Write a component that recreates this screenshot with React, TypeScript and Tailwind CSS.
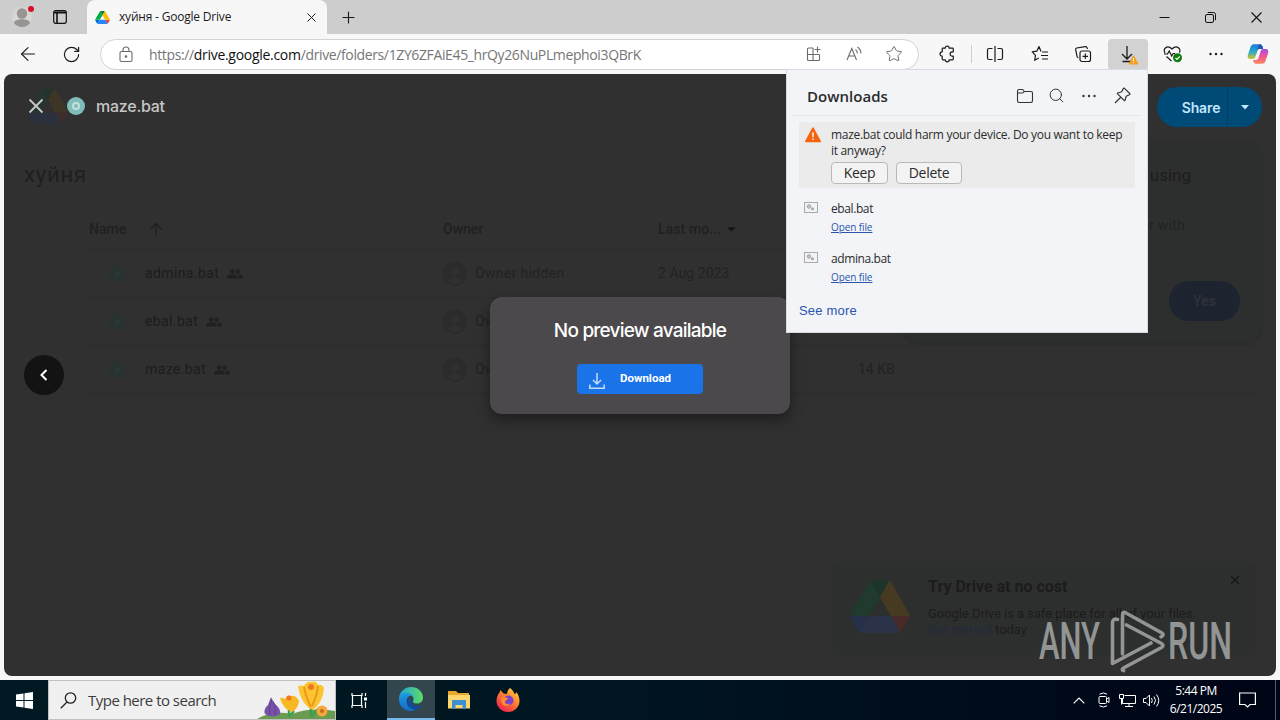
import React from 'react';
import { ArrowLeft, ArrowUp, Plus, RotateCw, X, Search, Star } from 'lucide-react';

const SEGOE = "font-['Open_Sans','Noto_Sans',sans-serif]";
const ROBOTO = "font-['Roboto',sans-serif]";

const files = [
  { name: 'admina.bat', owner: 'Owner hidden', modified: '2 Aug 2023', size: '' },
  { name: 'ebal.bat', owner: 'Owner hidden', modified: '', size: '' },
  { name: 'maze.bat', owner: 'Owner hidden', modified: '', size: '14 KB' },
];

const downloads = ['ebal.bat', 'admina.bat'];

type DriveLogoProps = { className?: string; dim?: boolean };

const DriveLogo = ({ className, dim }: DriveLogoProps) => {
  const c = dim
    ? ['#27304a', '#203a2d', '#482a29', '#1d3528', '#2b3348', '#463b22']
    : ['#0066da', '#00ac47', '#ea4335', '#00832d', '#2684fc', '#ffba00'];
  return (
    <svg viewBox="0 0 87.3 78" className={className}>
      <path fill={c[0]} d="m6.6 66.85 3.85 6.65c.8 1.4 1.95 2.5 3.3 3.3l13.75-23.8h-27.5c0 1.55.4 3.1 1.2 4.5z" />
      <path fill={c[1]} d="m43.65 25-13.75-23.8c-1.35.8-2.5 1.9-3.3 3.3l-25.4 44a9.06 9.06 0 0 0 -1.2 4.5h27.5z" />
      <path fill={c[2]} d="m73.55 76.8c1.35-.8 2.5-1.9 3.3-3.3l1.6-2.75 7.65-13.25c.8-1.4 1.2-2.95 1.2-4.5h-27.5l5.85 11.5z" />
      <path fill={c[3]} d="m43.65 25 13.75-23.8c-1.35-.8-2.9-1.2-4.5-1.2h-18.5c-1.6 0-3.15.45-4.5 1.2z" />
      <path fill={c[4]} d="m59.8 53h-32.3l-13.75 23.8c1.35.8 2.9 1.2 4.5 1.2h50.8c1.6 0 3.15-.45 4.5-1.2z" />
      <path fill={c[5]} d="m73.4 26.5-12.7-22c-.8-1.4-1.95-2.5-3.3-3.3l-13.75 23.8 16.15 28h27.45c0-1.55-.4-3.1-1.2-4.5z" />
    </svg>
  );
};

const Dots = () => (
  <svg width="16" height="16" viewBox="0 0 16 16" fill="currentColor">
    <circle cx="2.5" cy="8" r="1.2" />
    <circle cx="8" cy="8" r="1.2" />
    <circle cx="13.5" cy="8" r="1.2" />
  </svg>
);

const WarningIcon = ({ className }: { className?: string }) => (
  <svg viewBox="0 0 16 16" className={className}>
    <path d="M8 1.2 15.2 14.4H.8z" fill="currentColor" stroke="currentColor" strokeWidth="1.6" strokeLinejoin="round" />
    <path d="M8 5.2v5M8 11.6v1.5" stroke="#fff" strokeWidth="1.4" />
  </svg>
);

const TabStrip = () => (
  <div className="flex h-[34px] bg-[#cdcdcd]">
    <div className="flex w-[87px] items-center">
      <div className="relative ml-3 h-5 w-5">
        <svg width="20" height="20" viewBox="0 0 20 20">
          <circle cx="10" cy="10" r="10" fill="#d8d5d2" />
          <circle cx="10" cy="6.5" r="5.2" fill="#979491" />
          <path d="M2 16.3c0-3 4-4 8-4s8 1 8 4c-2 2.4-5 3.7-8 3.7s-6-1.3-8-3.7z" fill="#979491" />
        </svg>
        <span className="absolute -top-px right-[-2px] h-1.5 w-1.5 rounded-full bg-[#d80f2a]" />
      </div>
      <svg className="ml-[21px]" width="14" height="14" viewBox="0 0 14 14" fill="none" stroke="#111" strokeWidth="1.2">
        <rect x=".7" y=".7" width="12.6" height="12.6" rx="2" />
        <path d="M1 2.5h12" strokeWidth="2" />
        <path d="M4 3v10" strokeWidth="1.6" />
      </svg>
    </div>
    <div className={`flex w-[240px] items-center rounded-t-lg bg-[#f7f7f7] pl-2 ${SEGOE}`}>
      <DriveLogo className="h-[13px] w-[15px]" />
      <span className="ml-[9px] flex-1 whitespace-nowrap text-[12px] tracking-[-0.2px] text-[#1b1b1b]">хуйня - Google Drive</span>
      <X size={15} strokeWidth={1.6} className="mr-2 text-[#1b1b1b]" />
    </div>
    <div className="flex flex-1 items-center pl-[12px] text-[#1b1b1b]">
      <Plus size={19} strokeWidth={1.4} />
      <div className="ml-auto flex items-center gap-[35px] pr-[18px]">
        <svg width="11" height="11" viewBox="0 0 11 11"><path d="M.5 5.500h10" stroke="#111" /></svg>
        <svg width="11" height="11" viewBox="0 0 11 11" fill="none" stroke="#111">
          <rect x=".5" y="2.5" width="8" height="8" rx="1.5" />
          <path d="M2.8.5H8.500a2 2 0 0 1 2 2V8.200" />
        </svg>
        <svg width="11" height="11" viewBox="0 0 11 11"><path d="M.5.5l10 10M10.500.5l-10 10" stroke="#111" strokeWidth="1.1" /></svg>
      </div>
    </div>
  </div>
);

const Toolbar = () => (
  <div className={`flex h-10 items-center bg-[#f7f7f7] text-[#1b1b1b] ${SEGOE}`}>
    <ArrowLeft size={22} strokeWidth={1.2} className="ml-[17px]" />
    <RotateCw size={19} strokeWidth={1.5} className="ml-[23px]" />
    <div className="ml-[19px] flex h-[31px] w-[819px] items-center rounded-full border border-[#d3d3d3] bg-white text-[#6b6b6b]">
      <svg className="ml-[18px]" width="14" height="17" viewBox="0 0 14 17" fill="none" stroke="currentColor" strokeWidth="1.1">
        <rect x="1" y="5.5" width="12" height="10" rx="1.5" />
        <path d="M4 5.500V4a3 3 0 0 1 6 0v1.500" />
        <circle cx="7" cy="10.5" r=".8" fill="currentColor" />
      </svg>
      <span className="ml-[16px] flex-1 whitespace-nowrap text-[14px] tracking-[-0.375px] text-[#767676]">
        https://<span className="tracking-[-0.29px] text-[#111]">drive.google.com</span>/drive/folders/1ZY6ZFAiE45_hrQy26NuPLmephoi3QBrK
      </span>
      <svg width="16" height="16" viewBox="0 0 16 16" fill="none" stroke="currentColor" strokeWidth="1.1">
        <path d="M7 2H2.500Q1.500 2 1.500 3v10.500q0 1 1 1h10q1 0 1-1V8.500M1.500 8.500h12M7 2v12.500M11.500.5v6M8.500 3.500h6" />
      </svg>
      <svg className="ml-[24px]" width="17" height="16" viewBox="0 0 17 16" fill="none" stroke="currentColor" strokeWidth="1.1">
        <path d="M1 14 5.800 2.500 10.500 14M2.700 10H9M9.500 3.500q2 1.500 1.800 4M11.500 1q3.500 2.500 3.500 6.500" />
      </svg>
      <Star size={18} strokeWidth={1.3} className="ml-[22px] mr-[15px]" />
    </div>
    <svg className="ml-[19px]" width="18" height="18" viewBox="0 0 18 18" fill="none" stroke="currentColor" strokeWidth="1.2">
      <path d="M5 3.200h2.200a2 2 0 1 1 4 0h3.300q.8 0 .8.800v2.800h-1a2.200 2.200 0 0 0 0 4.400h1V14q0 .8-.8.800h-3.300a2 2 0 0 1-4 0H5q-.8 0-.8-.8v-2.800a2.200 2.200 0 0 1 0-4.400V4q0-.8.8-.8z" strokeLinejoin="round" />
    </svg>
    <div className="ml-[15px] h-[18px] w-px bg-[#cfcfcf]" />
    <svg className="ml-[14px]" width="18" height="18" viewBox="0 0 18 18" fill="none" stroke="currentColor" strokeWidth="1.2">
      <path d="M6.500 3.500H3q-1.500 0-1.500 1.500v8q0 1.500 1.500 1.500h3.500M11.500 3.500H15q1.500 0 1.500 1.500v8q0 1.500-1.500 1.500h-3.500M9 1v16" />
    </svg>
    <svg className="ml-[27px]" width="18" height="18" viewBox="0 0 18 18" fill="none" stroke="currentColor" strokeWidth="1.2">
      <path d="M10 6.500 8 1.500 5.800 6.200l-4.600.7 3.300 3.400-.8 5 4.100-2.300M11 7h6M10 10.500h7M11 14h6" strokeLinejoin="round" />
    </svg>
    <svg className="ml-[25px]" width="18" height="18" viewBox="0 0 18 18" fill="none" stroke="currentColor" strokeWidth="1.2">
      <rect x="6" y="6" width="10.5" height="10.5" rx="2" />
      <path d="M11.300 8.500v5.500M8.500 11.300H14M13.500 4l-.6-1.600q-.4-1-1.500-.8L2.600 3q-1.200.2-1 1.400l1.500 7.200q.3 1 1.300 1" />
    </svg>
    <div className="relative ml-[16px] flex h-[31px] w-10 items-center justify-center rounded bg-[#d2d2d2]">
      <svg className="mr-0.5" width="16" height="18" viewBox="0 0 16 18" fill="none" stroke="currentColor" strokeWidth="1.3">
        <path d="M8 1v13M3 9l5 5 5-5M3.500 16.500h9" />
      </svg>
      <WarningIcon className="absolute bottom-[5px] right-[9px] h-[10px] w-[11px] text-[#f2a01e]" />
    </div>
    <svg className="ml-[15px]" width="20" height="18" viewBox="0 0 20 18" fill="none" stroke="currentColor" strokeWidth="1.2">
      <path d="M2 8C0 4.500 2.500 1.800 5 1.800c2 0 3 1.200 4 2.200 1-1 2-2.200 4-2.200 2.800 0 5 3 3.300 6M1 9h3.500l1.700-3 2.500 5 1.500-2.500h2M3.500 11.500 8.500 16" />
      <circle cx="14.5" cy="12.7" r="4.5" fill="#107c10" stroke="none" />
      <path d="m12.500 12.800 1.500 1.500 2.700-2.800" stroke="#fff" />
    </svg>
    <div className="ml-[25px]"><Dots /></div>
    <svg className="ml-[23px]" width="22" height="20" viewBox="0 0 22 20">
      <defs>
        <linearGradient id="copA" x1="0" y1="0" x2="0" y2="1"><stop stopColor="#1f7bd8" /><stop offset=".5" stopColor="#27a9d0" /><stop offset="1" stopColor="#d9c52c" /></linearGradient>
        <linearGradient id="copB" x1="0" y1="0" x2="0" y2="1"><stop stopColor="#a352e0" /><stop offset=".5" stopColor="#ef5599" /><stop offset="1" stopColor="#f9885b" /></linearGradient>
      </defs>
      <path d="M15.500 2.500C15 .8 14 .2 12.500.2H7C4.500.2 3.800 2 3.200 4L1 10.500C.2 13 .8 15 3.500 15H6q1.700 0 2.300-2l2.200-7q.6-2 2.500-2h3z" fill="url(#copA)" />
      <path d="M6.500 17.500c.5 1.600 1.500 2.300 3 2.300H15c2.500 0 3.200-1.800 3.800-3.800L21 9.500C21.800 7 21.200 5 18.500 5H16q-1.700 0-2.300 2l-2.200 7q-.6 2-2.500 2H6z" fill="url(#copB)" />
      <path d="M12.500.2q2.300 0 3 2.300L16.300 5H12q-1.300.2-1.700 1.600L8.500 12 11 2z" fill="#2456b8" />
    </svg>
  </div>
);

const PeopleIcon = () => (
  <svg width="16" height="10" viewBox="0 0 16 10" fill="currentColor">
    <circle cx="5.3" cy="2.5" r="2.3" />
    <circle cx="10.7" cy="2.5" r="2.3" />
    <path d="M0 9.500V8c0-2 3.500-2.700 5.300-2.700S10.600 6 10.600 8v1.500zM11.800 9.500V8q0-1.500-1.200-2.600C12.500 5.400 16 6 16 8v1.500z" />
  </svg>
);

const FileRow = ({ file }: { file: (typeof files)[number] }) => (
  <div className="flex h-12 items-center border-b border-[#2b2b2b] text-[14px]">
    <div className="flex w-[355px] items-center">
      <span className="ml-[21px] flex h-4 w-4 items-center justify-center rounded-full bg-[#273331]">
        <span className="h-1.5 w-1.5 rounded-full bg-[#293735]" />
      </span>
      <span className="ml-5 mr-2 tracking-[0.38px] text-[#1c1c1c]">{file.name}</span>
      <span className="text-[#202020]"><PeopleIcon /></span>
    </div>
    <div className="flex w-[215px] items-center">
      <svg width="24" height="24" viewBox="0 0 24 24" fill="#2b2b2b">
        <circle cx="12" cy="12" r="12" />
        <g fill="#303030"><circle cx="12" cy="9" r="4" /><path d="M4 19q8-8 16 0-8 6-16 0z" /></g>
      </svg>
      <span className="ml-2 tracking-[0.33px] text-[#222]">{file.owner}</span>
    </div>
    <span className="w-[200px] tracking-[0.05px] text-[#222]">{file.modified}</span>
    <span className="text-[#222]">{file.size}</span>
  </div>
);

const DrivePage = () => (
  <div className={`h-full ${ROBOTO}`}>
    <div className="flex h-16 items-center pl-6">
      <DriveLogo dim className="h-9 w-10 opacity-60" />
    </div>
    <h1 className="pl-5 pt-[21px] text-[22px] leading-8 tracking-[0.8px] text-[#1f1f1f]">хуйня</h1>
    <div className="ml-[84px] mr-5 mt-[18px]">
      <div className="flex h-[41px] items-center border-b border-[#2b2b2b] text-[14px] font-medium text-[#202020]">
        <div className="flex w-[355px] items-center pl-px">
          <span>Name</span>
          <ArrowUp size={18} className="ml-[21px]" />
        </div>
        <span className="w-[215px]">Owner</span>
        <span className="flex items-center gap-1.5 tracking-[0.1px]">
          Last mo...
          <svg width="9" height="5" viewBox="0 0 10 5"><path d="M0 0h10L5 5z" fill="#161616" /></svg>
        </span>
      </div>
      {files.map((f) => <FileRow key={f.name} file={f} />)}
    </div>

    {/* Survey card, mostly covered by the downloads panel */}
    <div className="absolute right-[14px] top-[66px] flex h-[202px] w-[360px] flex-col items-end rounded-2xl bg-[#2d2f2e] shadow-[0_1px_3px_rgba(0,0,0,0.15)]">
      <span className="mr-[71px] mt-[23px] text-[17px] leading-6 text-[#1c1c1c]">using</span>
      <span className="mr-[77px] mt-[28px] text-[14px] leading-5 tracking-[0.2px] text-[#212222]">er with</span>
      <button className="mr-[22px] mt-[46px] h-10 w-[71px] rounded-full bg-[#1d2430] text-[14px] font-medium text-[#303339]">Yes</button>
    </div>

    {/* Promo card */}
    <div className="absolute bottom-[19px] right-5 flex h-24 w-[424px] rounded-lg bg-[#2d2f2e]">
      <DriveLogo dim className="ml-[18px] mt-[19px] h-[53px] w-[60px]" />
      <div className="ml-[18px] mt-[14px] text-[#1c1c1c]">
        <h2 className="text-[16px] font-bold leading-6">Try Drive at no cost</h2>
        <p className="mt-[7px] whitespace-nowrap text-[13px] leading-4 tracking-[-0.05px]">
          Google Drive is a safe place for all of your files.<br />
          <span className="text-[#222b3b]">Get started</span> today
        </p>
      </div>
      <X size={14} strokeWidth={2} className="absolute right-[14px] top-[12px] text-[#151515]" />
    </div>
  </div>
);

const PreviewOverlay = () => (
  <div className={`absolute inset-0 ${ROBOTO}`}>
    <div className="flex h-16 items-center pl-6">
      <svg width="16" height="16" viewBox="0 0 16 16"><path d="m1.500 1.500 13 13M14.500 1.500l-13 13" stroke="#c8c8c8" strokeWidth="1.800" /></svg>
      <span className="ml-[23px] flex h-[18px] w-[18px] items-center justify-center rounded-full bg-[#80bdb9]">
        <span className="h-2 w-2 rounded-full border-2 border-[#c2e0dd] bg-[#80bdb9]" />
      </span>
      <span className="ml-[11px] pb-px font-['Inter',sans-serif] text-[16px] font-medium tracking-[-0.25px] text-[#c6c6c6]">maze.bat</span>
      <div className="ml-auto mr-[14px] mt-[2px] flex h-10 w-[105px] rounded-full bg-[#004a77] font-['Inter',sans-serif] text-[14px] font-semibold text-[#c2e7ff]">
        <button className="w-[71px] border-r border-[#063e61] pl-[18px] pt-px tracking-[-0.1px]">Share</button>
        <button className="flex flex-1 items-center justify-center">
          <svg width="8" height="5" viewBox="0 0 8 5"><path d="M0 0h8L4 4.500z" fill="#c2e7ff" /></svg>
        </button>
      </div>
    </div>
    <button className="absolute left-5 top-[281px] flex h-10 w-10 items-center justify-center rounded-full bg-[#131313]">
      <svg width="10" height="12" viewBox="0 0 10 12"><path d="M7.500 1 2.500 6l5 5" fill="none" stroke="#fff" strokeWidth="2" /></svg>
    </button>
    <div className="absolute left-[486px] top-[223px] flex h-[117px] w-[300px] flex-col items-center rounded-xl bg-[#4c494c] shadow-[0_6px_14px_rgba(0,0,0,0.4)]">
      <p className="mt-[20px] whitespace-nowrap font-['Inter',sans-serif] text-[19px] font-medium leading-7 tracking-[-0.78px] text-white">No preview available</p>
      <button className="mt-[19px] flex h-[30px] w-[126px] items-center rounded-sm bg-[#1a73e8] text-[11.5px] font-bold text-white">
        <svg className="ml-3 mt-1" width="16" height="16" viewBox="0 0 16 16" fill="none" stroke="#c5dcf9" strokeWidth="1.5"><path d="M8 0v10.500M4 7l4 4 4-4M.8 11.500v3.700h14.400v-3.700" /></svg>
        <span className="ml-[15px]">Download</span>
      </button>
    </div>
  </div>
);

const DownloadsPanel = () => (
  <div className={`absolute left-[786px] top-[69px] h-[264px] w-[362px] border border-[#d9dbe0] bg-[#f2f4f8] text-[#2b2b2b] ${SEGOE}`}>
    <div className="mx-1.5 flex h-[46px] items-center border-b border-[#e6e8ec] pt-1.5 text-[#333]">
      <h2 className="flex-1 pl-3.5 pt-px text-[15px] font-semibold tracking-[0.03px] text-[#2b2b2b]">Downloads</h2>
      <svg width="18" height="16" viewBox="0 0 18 16" fill="none" stroke="currentColor" strokeWidth="1.1"><path d="M1.500 3q0-1.500 1.500-1.500h3q1 0 1.500 1l.7 1H15q1.500 0 1.500 1.500v7.500q0 2-1.500 2H3q-1.500 0-1.500-2zM1.500 5h5q1 0 1.700-1.500" /></svg>
      <Search size={17} strokeWidth={1.4} className="ml-[14px]" />
      <span className="ml-4"><Dots /></span>
      <svg className="ml-[17px] mr-[10px]" width="17" height="17" viewBox="0 0 17 17" fill="none" stroke="currentColor" strokeWidth="1.2" strokeLinejoin="round">
        <path d="m10.500 1.300 5.200 5.200q.5.700-.3 1.200l-3.200 1.600-1.200 3.900q-.3.800-.9.200L3.600 6.900q-.6-.6.200-.9l3.900-1.200 1.600-3.200q.5-.8 1.200-.3zM6.500 10.500 1 16" />
      </svg>
    </div>
    <div className="mx-3 mt-[6px] flex h-[66px] bg-[#ebebeb] pl-1.5 pt-[5px]">
      <WarningIcon className="h-4 w-4 shrink-0 text-[#f7630c]" />
      <div className="ml-2.5">
        <p className="whitespace-nowrap text-[12px] leading-4 tracking-[-0.31px]">maze.bat could harm your device. Do you want to keep<br />it anyway?</p>
        <div className="mt-[3px] flex gap-2 text-[14px] tracking-[-0.3px]">
          <button className="h-[22px] w-[57px] rounded border border-[#b9b9b9] bg-[#f3f3f3] leading-5">Keep</button>
          <button className="h-[22px] w-[66px] rounded border border-[#b9b9b9] bg-[#f3f3f3] leading-5">Delete</button>
        </div>
      </div>
    </div>
    <div className="mt-[3px]">
      {downloads.map((name) => (
        <div key={name} className="flex h-[50px] pl-[17px] pt-[9px]">
          <svg className="mt-[2px]" width="14" height="11" viewBox="0 0 14 11">
            <rect x=".5" y=".5" width="13" height="10" fill="#f3f3f3" stroke="#a7abb0" />
            <circle cx="5" cy="4.5" r="1.8" fill="#c4c4c4" stroke="#a5a5a5" />
            <circle cx="8.5" cy="6.8" r="1.5" fill="#a5a5a5" />
          </svg>
          <div className="ml-[13px]">
            <p className="text-[12px] leading-[18px] tracking-[-0.4px]">{name}</p>
            <a className="block text-[10px] leading-[18px] tracking-[-0.1px] text-[#2b54ad] underline">Open file</a>
          </div>
        </div>
      ))}
    </div>
    <a className="ml-3 mt-[10px] block font-['Liberation_Sans',sans-serif] text-[13px] leading-5 tracking-[0.2px] text-[#2b54ad]">See more</a>
  </div>
);

const Watermark = () => (
  <svg className="absolute left-[1036px] top-[606px] overflow-visible opacity-60" width="200" height="70" viewBox="0 0 200 70" fill="#d8d8d8" fontFamily="Roboto, sans-serif" fontSize="51.5" fontWeight="500">
    <text x="3" y="53" textLength="61" lengthAdjust="spacingAndGlyphs">ANY</text>
    <text x="132" y="53" textLength="64" lengthAdjust="spacingAndGlyphs">RUN</text>
    <path
      d="M81.500 13.500q-5-1.500-5 3.500V57.500L115 37M86.500 48V9q0-4 3.500-2L126 27q2.500 2-1 3.800M90.500 19l35 18.500q3 2 0 4L87.500 62q-2.500 1.700 0 2.700"
      fill="none"
      stroke="#d8d8d8"
      strokeWidth="3.6"
      strokeLinejoin="round"
      strokeLinecap="round"
    />
  </svg>
);

const Flowers = () => (
  <svg width="78" height="38" viewBox="0 0 78 38">
    <path d="M0 38q15-9 35-5 18-7 43-3v8z" fill="#6b9a52" />
    <path d="M32 36V24M54 36V20M32 36l5-6M54 36l8-9" stroke="#3fa04c" strokeWidth="2.5" />
    <path d="M14 16q1 4 5 8 5 4 4 9-8 5-15 0-2-5 3-9z" fill="#7752a8" />
    <path d="M15 18q-4 8-2 16M16 20q4 7 2 14" stroke="#5f4191" fill="none" />
    <path d="M23 17q2-1 5 1 2-5 5-3 5-1 7 2l2 3q-1 8-7 11-9-3-12-14z" fill="#f8b824" />
    <circle cx="32" cy="17" r="2.5" fill="#f0781e" />
    <path d="M41 5q4-1 6 0 3-5 7-4 5-2 7 3 4-1 6 3-1 14-11 22-12-5-15-24z" fill="#fcc52f" />
    <path d="M47 6q2 11 7 20M61 5q-1 10-6 20" fill="none" stroke="#ee951c" strokeWidth="2" />
    <circle cx="54" cy="6" r="3" fill="#f0781e" />
    <circle cx="65" cy="30" r="5.5" fill="#f5a839" />
    <circle cx="65" cy="30" r="2" fill="#c76a1b" />
  </svg>
);

const Taskbar = () => (
  <div className={`flex h-10 bg-gradient-to-r from-[#001922] via-[#001520] to-[#000516] text-white ${SEGOE}`}>
    <div className="flex w-12 items-center justify-center">
      <svg width="17" height="17" viewBox="0 0 17 17" fill="#fff"><path d="M0 2.500 7.500 1.400V8H0zM8.500 1.300 17 0v8H8.500zM0 9h7.500v6.600L0 14.500zM8.500 9H17v8l-8.500-1.300z" /></svg>
    </div>
    <div className="flex w-72 items-center border border-[#c0c0c0] bg-[#f0f0f0]">
      <svg className="ml-[11px]" width="17" height="17" viewBox="0 0 17 17" fill="none" stroke="#222" strokeWidth="1.3"><circle cx="10.5" cy="6" r="5.2" /><path d="M7 10 .8 16.200" /></svg>
      <span className="ml-[11px] flex-1 whitespace-nowrap text-[15px] tracking-[-0.52px] text-[#3c3c3c]">Type here to search</span>
      <Flowers />
    </div>
    <div className="flex w-[51px] items-center justify-center pr-1">
      <svg width="17" height="17" viewBox="0 0 17 17" fill="none" stroke="#fff" strokeWidth="1.2"><path d="M1 1v2.500h10V1M1 16v-2.500h10V16M1.500 3.500v10M10.500 3.500v10M14.500 1v3M14.500 10v6" /><path d="M13 5.500h3v3h-3z" fill="#fff" stroke="none" /></svg>
    </div>
    <div className="flex w-12 items-center justify-center border-b-2 border-[#76b9ed] bg-[#33464e]">
      <svg width="24" height="24" viewBox="0 0 24 24">
        <defs>
          <linearGradient id="edgeA" x1="0" x2="1"><stop stopColor="#1fa3e0" /><stop offset="1" stopColor="#5fdc62" /></linearGradient>
          <linearGradient id="edgeB" x1="0" y1="0" x2="0" y2="1"><stop stopColor="#1d9be3" /><stop offset="1" stopColor="#1569c4" /></linearGradient>
        </defs>
        <path d="M0 11C1 4 6 0 12 0c7 0 12 5 12 10.500 0 4-3 6-6 6-3.500 0-4.500-1.300-4-2.200C16 11 13 7 8.500 7 4 7 1 9 0 12z" fill="url(#edgeA)" />
        <path d="M0 12c0-4 4-6 8-6 3 0 5 1.500 6 3-4-1-6.500 1-6.500 5 0 4.500 4 8.500 9 8.500-2 1-3.500 1.500-5 1.500C5 24 0 19 0 12z" fill="url(#edgeB)" />
        <path d="M9 11c-3 6 2 12 8 11.500 2.500-.5 4.500-2.500 5.500-4.500-6 3-12-1-9.500-4.500" fill="#0f4e9c" />
      </svg>
    </div>
    <div className="flex w-12 items-center justify-center">
      <svg width="22" height="20" viewBox="0 0 22 20"><path d="M0 1h8l2 2h11v15H0z" fill="#e8a92c" /><path d="M0 5h22v13.500H0z" fill="#fdd670" /><path d="M4 19v-8q0-1 1-1h12q1 0 1 1v8h-3.500v-4h-7v4z" fill="#3e8fd0" /></svg>
    </div>
    <div className="flex w-[50px] items-center justify-center">
      <svg width="24" height="24" viewBox="0 0 24 24">
        <defs><linearGradient id="fox" x1="1" y1="0" x2=".3" y2="1"><stop stopColor="#ffe14a" /><stop offset=".45" stopColor="#ff8a2c" /><stop offset="1" stopColor="#f0234f" /></linearGradient></defs>
        <path d="M14 0c2 1.500 4 4 4.500 6 1 .2 2-1 2-2 2 3 3 6 3 9 0 6-5 11-11.500 11S.5 19 .5 13C.5 9 2 6.500 3.500 4.500L4.500 2l3 3.500L11 6c0-2.500 1.500-5 3-6z" fill="url(#fox)" />
        <circle cx="12.5" cy="12.5" r="5" fill="#7a42c8" />
        <path d="M5 10c3-2 5 0 7 0 0 2-3 2-3 4s3 3 5.500 1.500C13 19 6 19 5.500 14z" fill="#ff8a2c" />
      </svg>
    </div>
    <div className="ml-auto flex items-center">
      <svg width="12" height="7" viewBox="0 0 12 7" fill="none" stroke="#fff" strokeWidth="1.2"><path d="m.7 6.300 5.300-5.300 5.300 5.300" /></svg>
      <svg className="ml-[13px]" width="12" height="16" viewBox="0 0 12 16" fill="none" stroke="#fff"><rect x="1" y="4.5" width="7.5" height="7" rx="1" /><path d="m8.500 7 2.500-1.500v5L8.500 9M1.500 2.200q4-2.500 7.500 0M1.500 13.800q4 2.500 7.500 0" /></svg>
      <svg className="ml-[9px]" width="17" height="15" viewBox="0 0 17 15" fill="none" stroke="#fff"><path d="M5.500 2.500h11v8H3.500V6M10 10.500v3M6 13.500h8M.5 1.500h4v4h-4zM2.500 5.500v6" /></svg>
      <svg className="ml-[7px]" width="17" height="15" viewBox="0 0 17 15" fill="none" stroke="#fff"><path d="M.5 5.500h2.500L6.500 2v11L3 9.500H.5zM8.500 5q1.500 2.500 0 5M11 3.500q3 4 0 8M13.500 1.500q4.500 6 0 12" /></svg>
      <div className="ml-[9px] w-[54px] whitespace-nowrap text-center text-[12px] leading-[18px] tracking-[-0.5px]">
        <p>5:44 PM</p>
        <p>6/21/2025</p>
      </div>
      <svg className="ml-[16px] mr-[19px]" width="17" height="16" viewBox="0 0 17 16" fill="none" stroke="#fff" strokeWidth="1.2"><path d="M.6 1h15.800v11.500H11L8.500 15 6 12.500H.6z" /></svg>
      <div className="mr-1 h-10 w-px bg-[#53606a]" />
    </div>
  </div>
);

const App = () => {
  return (
    <div className="relative flex h-[720px] w-[1280px] flex-col overflow-hidden bg-[#f7f7f7]">
      <TabStrip />
      <Toolbar />
      <main className="relative mx-1 mb-1 h-[602px] overflow-hidden rounded-lg bg-[#303030]">
        <DrivePage />
        <PreviewOverlay />
      </main>
      <Taskbar />
      <DownloadsPanel />
      <Watermark />
    </div>
  );
};

export default App;
